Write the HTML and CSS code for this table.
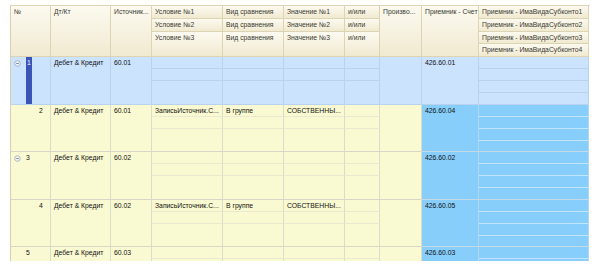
FILE: index.html
```html
<!DOCTYPE html>
<html lang="ru">
<head>
<meta charset="utf-8">
<title>Таблица</title>
<link rel="stylesheet" href="styles.css">
</head>
<body>
<div class="table">
  <div class="head">
    <div class="cell h c1 ra">№</div>
    <div class="cell h c2 ra">Дт/Кт</div>
    <div class="cell h c3 ra">Источник...</div>
    <div class="cell h c4 r1">Условие №1</div>
    <div class="cell h c5 r1">Вид сравнения</div>
    <div class="cell h c6 r1">Значение №1</div>
    <div class="cell h c7 r1">и/или</div>
    <div class="cell h c8 ra">Произво...</div>
    <div class="cell h c9 ra">Приемник - Счет</div>
    <div class="cell h c10 r1">Приемник - ИмаВидаСубконто1</div>
    <div class="cell h c4 r2">Условие №2</div>
    <div class="cell h c5 r2">Вид сравнения</div>
    <div class="cell h c6 r2">Значение №2</div>
    <div class="cell h c7 r2">и/или</div>
    <div class="cell h c10 r2">Приемник - ИмаВидаСубконто2</div>
    <div class="cell h c4 r34">Условие №3</div>
    <div class="cell h c5 r34">Вид сравнения</div>
    <div class="cell h c6 r34">Значение №3</div>
    <div class="cell h c7 r34">и/или</div>
    <div class="cell h c10 r3">Приемник - ИмаВидаСубконто3</div>
    <div class="cell h c10 r4">Приемник - ИмаВидаСубконто4</div>
  </div>

  <div class="rec sel">
    <div class="cell c1 ra num grp"><svg class="tog" width="7" height="7" viewBox="0 0 7 7"><circle cx="3.5" cy="3.5" r="2.8" fill="#eef3f9" stroke="#a3b3c6"/><path d="M2.2 3.5h2.6" stroke="#7489a3"/></svg><span class="bar">1</span></div>
    <div class="cell c2 ra">Дебет &amp; Кредит</div>
    <div class="cell c3 ra">60.01</div>
    <div class="cell c4 r1"></div><div class="cell c5 r1"></div><div class="cell c6 r1"></div><div class="cell c7 r1"></div>
    <div class="cell c4 r2"></div><div class="cell c5 r2"></div><div class="cell c6 r2"></div><div class="cell c7 r2"></div>
    <div class="cell c4 r34 last"></div><div class="cell c5 r34 last"></div><div class="cell c6 r34 last"></div><div class="cell c7 r34 last"></div>
    <div class="cell c8 ra"></div>
    <div class="cell c9 ra">426.60.01</div>
    <div class="cell c10 r1"></div><div class="cell c10 r2"></div><div class="cell c10 r3"></div><div class="cell c10 r4 last"></div>
  </div>

  <div class="rec">
    <div class="cell c1 ra num child">2</div>
    <div class="cell c2 ra">Дебет &amp; Кредит</div>
    <div class="cell c3 ra">60.01</div>
    <div class="cell c4 r1">ЗаписьИсточник.С...</div><div class="cell c5 r1">В группе</div><div class="cell c6 r1">СОБСТВЕННЫ...</div><div class="cell c7 r1"></div>
    <div class="cell c4 r2"></div><div class="cell c5 r2"></div><div class="cell c6 r2"></div><div class="cell c7 r2"></div>
    <div class="cell c4 r34 last"></div><div class="cell c5 r34 last"></div><div class="cell c6 r34 last"></div><div class="cell c7 r34 last"></div>
    <div class="cell c8 ra"></div>
    <div class="cell c9 ra blue">426.60.04</div>
    <div class="cell c10 r1 blue"></div><div class="cell c10 r2 blue"></div><div class="cell c10 r3 blue"></div><div class="cell c10 r4 blue last"></div>
  </div>

  <div class="rec">
    <div class="cell c1 ra num grp"><svg class="tog" width="7" height="7" viewBox="0 0 7 7"><circle cx="3.5" cy="3.5" r="2.8" fill="#f4f4ec" stroke="#aeb7c2"/><path d="M2.2 3.5h2.6" stroke="#8293a6"/></svg><span class="n">3</span></div>
    <div class="cell c2 ra">Дебет &amp; Кредит</div>
    <div class="cell c3 ra">60.02</div>
    <div class="cell c4 r1"></div><div class="cell c5 r1"></div><div class="cell c6 r1"></div><div class="cell c7 r1"></div>
    <div class="cell c4 r2"></div><div class="cell c5 r2"></div><div class="cell c6 r2"></div><div class="cell c7 r2"></div>
    <div class="cell c4 r34 last"></div><div class="cell c5 r34 last"></div><div class="cell c6 r34 last"></div><div class="cell c7 r34 last"></div>
    <div class="cell c8 ra"></div>
    <div class="cell c9 ra blue">426.60.02</div>
    <div class="cell c10 r1 blue"></div><div class="cell c10 r2 blue"></div><div class="cell c10 r3 blue"></div><div class="cell c10 r4 blue last"></div>
  </div>

  <div class="rec">
    <div class="cell c1 ra num child">4</div>
    <div class="cell c2 ra">Дебет &amp; Кредит</div>
    <div class="cell c3 ra">60.02</div>
    <div class="cell c4 r1">ЗаписьИсточник.С...</div><div class="cell c5 r1">В группе</div><div class="cell c6 r1">СОБСТВЕННЫ...</div><div class="cell c7 r1"></div>
    <div class="cell c4 r2"></div><div class="cell c5 r2"></div><div class="cell c6 r2"></div><div class="cell c7 r2"></div>
    <div class="cell c4 r34 last"></div><div class="cell c5 r34 last"></div><div class="cell c6 r34 last"></div><div class="cell c7 r34 last"></div>
    <div class="cell c8 ra"></div>
    <div class="cell c9 ra blue">426.60.05</div>
    <div class="cell c10 r1 blue"></div><div class="cell c10 r2 blue"></div><div class="cell c10 r3 blue"></div><div class="cell c10 r4 blue last"></div>
  </div>

  <div class="rec">
    <div class="cell c1 ra num grp"><span class="tog-gap"></span><span class="n">5</span></div>
    <div class="cell c2 ra">Дебет &amp; Кредит</div>
    <div class="cell c3 ra">60.03</div>
    <div class="cell c4 r1"></div><div class="cell c5 r1"></div><div class="cell c6 r1"></div><div class="cell c7 r1"></div>
    <div class="cell c4 r2"></div><div class="cell c5 r2"></div><div class="cell c6 r2"></div><div class="cell c7 r2"></div>
    <div class="cell c4 r34 last"></div><div class="cell c5 r34 last"></div><div class="cell c6 r34 last"></div><div class="cell c7 r34 last"></div>
    <div class="cell c8 ra"></div>
    <div class="cell c9 ra blue">426.60.03</div>
    <div class="cell c10 r1 blue"></div><div class="cell c10 r2 blue"></div><div class="cell c10 r3 blue"></div><div class="cell c10 r4 blue last"></div>
  </div>
</div>
</body>
</html>
```

FILE: styles.css
```css
html, body {
  margin: 0;
  background: #ffffff;
}
body {
  font-family: "Liberation Sans", Arial, sans-serif;
  font-size: 6.8px;
  color: #111;
}
.table {
  margin: 5px 0 0 10px;
  width: 579px;
  height: 255px;
  overflow: hidden;
  border-left: 1px solid #d6cfb4;
  border-top: 1px solid #ddd5b6;
}
.head, .rec {
  display: grid;
  grid-template-columns: 40px 60px 41px 71px 61px 61px 35px 42px 57px 110px;
}
.head { grid-template-rows: 13px 13px 12px 13px; }
.rec { grid-template-rows: 12px 12px 12px 11.5px; }

.c1 { grid-column: 1; }
.c2 { grid-column: 2; }
.c3 { grid-column: 3; }
.c4 { grid-column: 4; }
.c5 { grid-column: 5; }
.c6 { grid-column: 6; }
.c7 { grid-column: 7; }
.c8 { grid-column: 8; }
.c9 { grid-column: 9; }
.c10 { grid-column: 10; }
.ra { grid-row: 1 / 5; }
.r1 { grid-row: 1; }
.r2 { grid-row: 2; }
.r3 { grid-row: 3; }
.r4 { grid-row: 4; }
.r34 { grid-row: 3 / 5; }

.cell {
  box-sizing: border-box;
  min-width: 0;
  padding-left: 3px;
  line-height: 11px;
  white-space: nowrap;
  overflow: hidden;
  background: #fafad2;
  border-right: 1px solid #dcdccb;
  border-bottom: 1px solid #ebe9cf;
}
.rec .ra, .rec .last { border-bottom-color: #d7d7c8; }

.h {
  line-height: 12px;
  color: #3a3a34;
  background: linear-gradient(#fcfaf0, #f1ead1);
  border-right-color: #ddd4b4;
  border-bottom-color: #ddd4b4;
}

.blue {
  background: #87cefa;
  border-right-color: #b2d6ee;
  border-bottom-color: #c2e5fb;
}
.rec .blue.ra, .rec .blue.last { border-bottom-color: #c6d9e6; }

.sel .cell {
  background: #cbe3fd;
  border-right-color: #b8d2ef;
  border-bottom-color: #b8d2ef;
}

.num {
  display: flex;
  align-items: flex-start;
}
.child { padding-left: 28px; }
.grp { padding-left: 3px; }
.tog {
  flex: none;
  margin-top: 3px;
  margin-right: 4px;
}
.tog-gap {
  flex: none;
  width: 11px;
}
.n { margin-left: 1px; }
.bar {
  align-self: stretch;
  width: 6px;
  margin-left: 1px;
  padding-left: 1px;
  box-sizing: border-box;
  background: #3b55b6;
  color: #ffffff;
}
```
